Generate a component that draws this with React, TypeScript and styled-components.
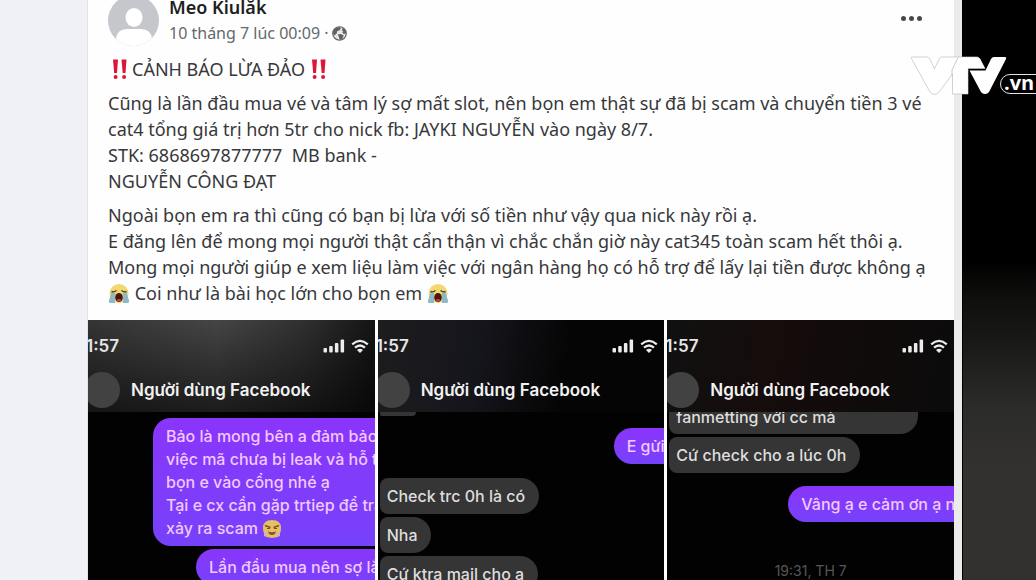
import React from 'react';
import styled, { createGlobalStyle } from 'styled-components';

const GlobalStyle = createGlobalStyle`
  *, *::before, *::after { box-sizing: border-box; }
  body { margin: 0; background: #000; }
  p, h1, h2 { margin: 0; font-weight: inherit; font-size: inherit; }
`;

const Page = styled.div`
  position: relative;
  display: grid;
  grid-template-columns: 88px minmax(0, 1fr) 74px;
  height: 100vh;
  overflow: hidden;
  font-family: 'Noto Sans', 'Open Sans', sans-serif;
  color: #37383b;
`;

const Gutter = styled.div`
  background: #eff1f6;
  border-right: 1px solid #e2e3e9;
`;

const Backdrop = styled.div`
  background: linear-gradient(180deg, #000 0, #000 45%, #0e0e0d 51%, #1c1c1b 61%, #2b2b2a 70%, #323130 80%);
  border-left: 1px solid #000;
`;

const Post = styled.article`
  display: flex;
  flex-direction: column;
  min-height: 0;
  background: #fefefe;
  border-right: 8px solid #ebebea;
`;

const PostHeader = styled.header`
  display: flex;
  align-items: flex-end;
  gap: 10px;
  height: 46px;
  padding: 0 32px 0 20px;
`;

const Author = styled.div`
  flex: 1;
  display: flex;
  flex-direction: column;
`;

const AuthorName = styled.h1`
  font-size: 18px;
  line-height: 26px;
  font-weight: 600;
  color: #1d1e21;
`;

const Meta = styled.p`
  display: flex;
  align-items: center;
  gap: 3px;
  font-size: 16px;
  line-height: 26px;
  color: #66686c;
`;

const MoreButton = styled.button`
  display: flex;
  align-items: center;
  justify-content: center;
  gap: 3px;
  align-self: flex-start;
  height: 36px;
  padding: 0;
  border: 0;
  background: none;
`;

const Dot = styled.span`
  width: 5px;
  height: 5px;
  border-radius: 50%;
  background: #47484b;
`;

const PostBody = styled.div`
  display: flex;
  flex-direction: column;
  gap: 8px;
  padding: 10px 16px 14px 20px;
  font-size: 18px;
  line-height: 26px;
  white-space: nowrap;
`;

const Paragraph = styled.p``;

const Warning = styled.p`
  display: flex;
  align-items: center;
  gap: 2px;
`;

const InlineIcon = styled.svg`
  vertical-align: -5px;
`;

const Gallery = styled.div`
  flex: 1;
  display: grid;
  grid-template-columns: repeat(3, minmax(0, 1fr));
  gap: 3px;
  min-height: 0;
`;

const Phone = styled.section`
  display: flex;
  flex-direction: column;
  min-width: 0;
  overflow: hidden;
  background: #020202;
  color: #e6e6e6;
  font-family: Inter, 'Liberation Sans', sans-serif;
  white-space: nowrap;
`;

const PhoneTop = styled.header<{ $tone: string }>`
  flex: none;
  height: 92px;
  background: ${(p) => p.$tone};
`;

const StatusBar = styled.div`
  display: flex;
  align-items: center;
  justify-content: space-between;
  height: 51px;
  padding: 0 6px 0 0;
  font-size: 17px;
  font-weight: 600;
`;

const Clock = styled.span`
  margin-left: -2px;
`;

const Contact = styled.div`
  display: flex;
  align-items: center;
  gap: 11px;
  height: 37px;
  margin-left: -4px;
  font-size: 17px;
  font-weight: 600;
  color: #f2f2f2;
`;

const ContactPhoto = styled.span`
  flex: none;
  width: 36px;
  height: 36px;
  border-radius: 50%;
  background: #424242;
`;

const Thread = styled.div<{ $start: number }>`
  flex: 1;
  min-height: 0;
  overflow: hidden;
  display: flex;
  flex-direction: column;
  align-items: flex-start;
  font-size: 16px;
  font-weight: 500;
  line-height: 23px;

  &::before {
    content: '';
    flex: none;
    height: ${(p) => p.$start}px;
  }
`;

const Received = styled.p<{ $before?: number }>`
  flex: none;
  margin-top: ${(p) => p.$before ?? 3}px;
  margin-left: 2px;
  padding: 7px 14px 6px 7px;
  border-radius: 8px 18px 18px 8px;
  background: #353535;
  color: #dedede;
`;

const ClippedReceived = styled(Received)<{ $width: number; $height: number }>`
  display: flex;
  align-items: flex-end;
  width: ${(p) => p.$width}px;
  height: ${(p) => p.$height}px;
  margin-top: 0;
  padding-top: 0;
  padding-bottom: ${(p) => Math.min(p.$height - 1, 5)}px;
  border-radius: 0 0 18px 8px;
`;

const Sent = styled.p<{ $indent: number; $before?: number }>`
  flex: none;
  align-self: stretch;
  margin-top: ${(p) => p.$before ?? 3}px;
  margin-left: ${(p) => p.$indent}px;
  padding: 7px 0 6px 13px;
  border-radius: 18px 0 0 18px;
  background: linear-gradient(180deg, #8a35fb, #7642fb);
  color: #f1c9ff;
  overflow: hidden;
`;

const Timestamp = styled.time`
  margin-top: 37px;
  align-self: center;
  font-size: 14px;
  font-weight: 400;
  color: #565656;
`;

const Watermark = styled.svg`
  position: absolute;
  top: 54px;
  right: 0;
`;

const AvatarArt = styled.svg`
  flex: none;
`;

const Avatar = () => (
  <AvatarArt width="51" height="51" viewBox="0 0 51 51" role="img" aria-label="Meo Kiulăk">
    <defs>
      <clipPath id="avatar-clip">
        <circle cx="25.5" cy="25.5" r="25.5" />
      </clipPath>
    </defs>
    <g clipPath="url(#avatar-clip)">
      <rect width="51" height="51" fill="#c6c7cc" />
      <ellipse cx="26" cy="22.5" rx="8.5" ry="9.5" fill="#fff" />
      <path d="M8 51V44Q9 34 19 34H33Q43 34 44 44V51Z" fill="#fff" />
    </g>
  </AvatarArt>
);

const Globe = () => (
  <svg width="15" height="15" viewBox="0 0 16 16" aria-hidden="true">
    <circle cx="8" cy="8" r="7.2" fill="#e6e7e9" stroke="#606266" strokeWidth="1.3" />
    <path d="M1 8Q1 2 8 1L9.500 2.500 8 4.500 5.500 5.500 5 8 2.500 10Z" fill="#606266" />
    <path d="M11.500 1.800Q15 4 15 8L12.500 8.500 11 7 12 5.500 10.500 4.500Z" fill="#606266" />
    <path d="M6 9L9.500 8.500 12.500 10 11 13.500 8 15 7.500 12Z" fill="#606266" />
  </svg>
);

const DoubleBang = () => (
  <svg width="22" height="22" viewBox="0 0 22 22" role="img" aria-label="!!">
    <g fill="#dc1638">
      <path d="M5 1.500H10L9 15H6.200Z" />
      <path d="M13.500 1.500H18.500L17.500 15H14.700Z" />
      <circle cx="7.600" cy="19" r="2" />
      <circle cx="16.100" cy="19" r="2" />
    </g>
  </svg>
);

const CryingFace = () => (
  <InlineIcon width="22" height="22" viewBox="0 0 22 22" role="img" aria-label="crying">
    <circle cx="11" cy="10.500" r="9.500" fill="#f3d872" />
    <path d="M3.500 9.500H7V20H2Q0 19 1.500 16Z" fill="#8db9c9" />
    <path d="M18.500 9.500H15V20H20Q22 19 20.500 16Z" fill="#8db9c9" />
    <path d="M3.500 8.500Q6 9.500 8.500 7.500M13.500 7.500Q16 9.500 18.500 8.500" stroke="#4c3b25" strokeWidth="1.400" fill="none" />
    <ellipse cx="11" cy="14.500" rx="3.800" ry="4.500" fill="#4a1614" />
    <path d="M8.500 17Q11 15 13.500 17Q11 20 8.500 17Z" fill="#d3423c" />
  </InlineIcon>
);

const SmirkFace = () => (
  <InlineIcon width="20" height="20" viewBox="0 0 20 20" role="img" aria-label="tearful laugh">
    <path d="M1 9Q1 1 10 1T19 9Q19 15 15 18L10 19 5 18Q1 15 1 9Z" fill="#e6bf62" />
    <path d="M3 6.500L8.500 8.500M17 6.500L11.500 8.500" stroke="#7a5228" strokeWidth="1.400" />
    <path d="M5 9.500H8M12 9.500H15" stroke="#7a5228" strokeWidth="1" />
    <path d="M6 12.500Q10 14 14 12.500Q13 16 10 16T6 12.500Z" fill="#8a4e34" />
    <path d="M2 13L6 15 5.500 18.500 2 17ZM18 13L14 15 14.500 18.500 18 17Z" fill="#c9b4bb" />
  </InlineIcon>
);

const Signals = () => (
  <svg width="46" height="16" viewBox="0 0 46 16" role="img" aria-label="signal and Wi-Fi">
    <g fill="#ececec">
      <rect x="0.500" y="10" width="3.500" height="4.500" rx="1" />
      <rect x="6.200" y="8" width="3.500" height="6.500" rx="1" />
      <rect x="11.900" y="5" width="3.500" height="9.500" rx="1" />
      <rect x="17.600" y="1.500" width="3.500" height="13" rx="1" />
      <path d="M37 15L34 12Q37 9.500 40 12Z" />
    </g>
    <g fill="none" stroke="#ececec" strokeWidth="2.200">
      <path d="M29.200 6.300Q37 -0.500 44.800 6.300" />
      <path d="M32 9.700Q37 5.300 42 9.700" />
    </g>
  </svg>
);

const VtvLogo = () => (
  <Watermark width="126" height="44" viewBox="910 54 126 44" role="img" aria-label="VTV.vn">
    <g fill="#fff" strokeLinejoin="round">
      <path
        d="M912 57H927Q929 57 930 59L934.300 69 939.500 58.500Q940.300 57 942 57H977Q979 57 980 59L985 68.500H968V94H952.500V74L939 92Q937 94.500 934.300 94.500T930 92L911.500 58.500Q911 57 912 57Z"
        stroke="#bdbdbd"
        strokeWidth="0.700"
      />
      <path d="M958 57.500L952 70V76" fill="none" stroke="#bdbdbd" strokeWidth="0.800" />
      <path d="M962.500 57.500H977Q979 57.500 980 59L984.500 68H967.700V93.500H962.500Z" />
      <path d="M969.500 70.500H985.500L991 59Q992 57 994 57H1005Q1006.800 57 1006 59L989 92Q987.500 94 985 94T981 92Z" />
    </g>
    <rect x="1000.500" y="74.500" width="48" height="19" rx="9.500" fill="#000" stroke="#e4e4e4" />
    <text x="1004" y="90" fill="#fff" fontFamily="'Open Sans', sans-serif" fontWeight="700" fontSize="20">
      .vn
    </text>
  </Watermark>
);

const PhoneHeader = ({ tone }: { tone: string }) => (
  <PhoneTop $tone={tone}>
    <StatusBar>
      <Clock>1:57</Clock>
      <Signals />
    </StatusBar>
    <Contact>
      <ContactPhoto />
      <h2>Người dùng Facebook</h2>
    </Contact>
  </PhoneTop>
);

export default function App() {
  return (
    <>
      <GlobalStyle />
      <Page>
        <Gutter />
        <Post>
          <PostHeader>
            <Avatar />
            <Author>
              <AuthorName>Meo Kiulăk</AuthorName>
              <Meta>
                <span>10 tháng 7 lúc 00:09 ·</span>
                <Globe />
              </Meta>
            </Author>
            <MoreButton type="button" aria-label="More options">
              <Dot />
              <Dot />
              <Dot />
            </MoreButton>
          </PostHeader>
          <PostBody>
            <Warning>
              <DoubleBang />
              CẢNH BÁO LỪA ĐẢO
              <DoubleBang />
            </Warning>
            <Paragraph>
              Cũng là lần đầu mua vé và tâm lý sợ mất slot, nên bọn em thật sự đã bị scam và chuyển tiền 3 vé
              <br />
              cat4 tổng giá trị hơn 5tr cho nick fb: JAYKI NGUYỄN vào ngày 8/7.
              <br />
              STK: 6868697877777&nbsp; MB bank -
              <br />
              NGUYỄN CÔNG ĐẠT
            </Paragraph>
            <Paragraph>
              Ngoài bọn em ra thì cũng có bạn bị lừa với số tiền như vậy qua nick này rồi ạ.
              <br />
              E đăng lên để mong mọi người thật cẩn thận vì chắc chắn giờ này cat345 toàn scam hết thôi ạ.
              <br />
              Mong mọi người giúp e xem liệu làm việc với ngân hàng họ có hỗ trợ để lấy lại tiền được không ạ
              <br />
              <CryingFace /> Coi như là bài học lớn cho bọn em <CryingFace />
            </Paragraph>
          </PostBody>
          <Gallery>
            <Phone>
              <PhoneHeader tone="linear-gradient(180deg, transparent 0, rgba(0, 0, 0, 0.6) 100%), linear-gradient(90deg, #343434 0, #454545 45%, #303030 75%, #141414 100%)" />
              <Thread $start={6}>
                <Sent $indent={65} $before={0}>
                  Bảo là mong bên a đảm bảo
                  <br />
                  việc mã chưa bị leak và hỗ trợ
                  <br />
                  bọn e vào cổng nhé ạ
                  <br />
                  Tại e cx cần gặp trtiep để tránh
                  <br />
                  xảy ra scam <SmirkFace />
                </Sent>
                <Sent $indent={108}>Lần đầu mua nên sợ lắm</Sent>
              </Thread>
            </Phone>
            <Phone>
              <PhoneHeader tone="linear-gradient(100deg, #1d1d1f 0, #15151c 35%, #050505 65%)" />
              <Thread $start={0}>
                <ClippedReceived $width={36} $height={4} />
                <Sent $indent={236} $before={12}>
                  E gửi
                </Sent>
                <Received $before={14}>Check trc 0h là có</Received>
                <Received>Nha</Received>
                <Received>Cứ ktra mail cho a</Received>
              </Thread>
            </Phone>
            <Phone>
              <PhoneHeader tone="linear-gradient(100deg, #101010 0, #160c0c 35%, #0b0b0b 100%)" />
              <Thread $start={0}>
                <ClippedReceived $width={249} $height={22}>
                  fanmetting với cc mà
                </ClippedReceived>
                <Received>Cứ check cho a lúc 0h</Received>
                <Sent $indent={121} $before={13}>
                  Vâng ạ e cảm ơn ạ nhiều
                </Sent>
                <Timestamp>19:31, TH 7</Timestamp>
              </Thread>
            </Phone>
          </Gallery>
        </Post>
        <Backdrop />
        <VtvLogo />
      </Page>
    </>
  );
}
